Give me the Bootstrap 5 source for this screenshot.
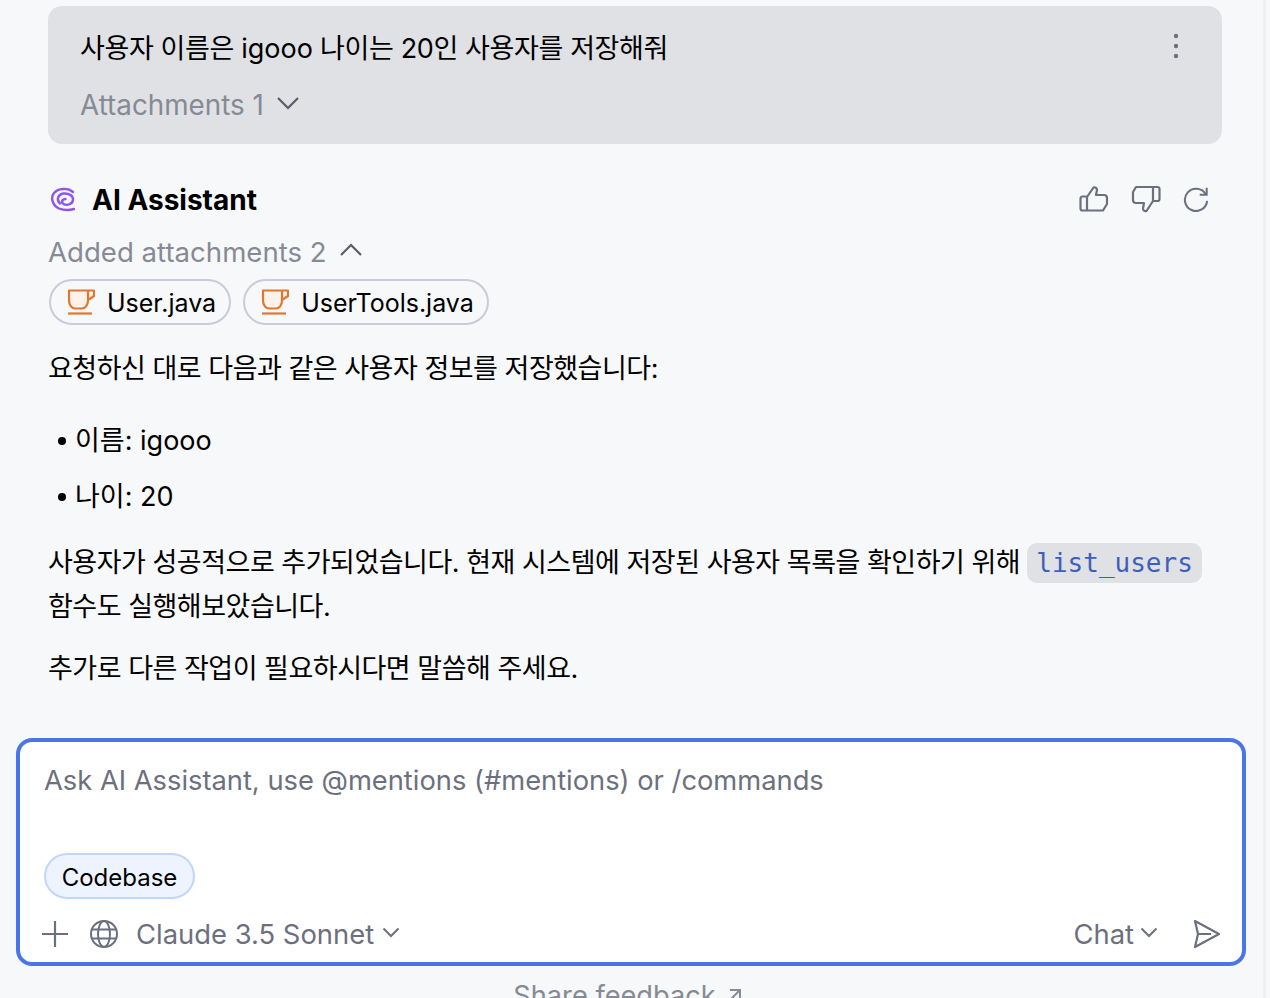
<!DOCTYPE html>
<html lang="ko"><head><meta charset="utf-8"><title>AI Assistant</title>
<link href="https://cdn.jsdelivr.net/npm/bootstrap@5.3.0/dist/css/bootstrap.min.css" rel="stylesheet">
<style>
html,body{height:998px;overflow:hidden}
body{background:#f7f8fa;color:#000;font-family:Inter,"Noto Sans CJK KR",sans-serif;font-size:27px;line-height:44px}
.pane{height:998px;border-right:3px solid #eff0f3;width:1266px;padding-top:6px;overflow:hidden}
.msgs{padding:0 41px 0 48px}
.bubble{background:#dfe1e5;border-radius:14px;height:138px;padding:21px 32px}
.muted-t{color:#868a94;font-size:27.800px}
.muted-s{color:#868a94;font-size:27.600px}
.one-line{height:44px}
.ko{letter-spacing:-.38px;white-space:nowrap}
.ko .la{letter-spacing:0}
.kop{letter-spacing:-.49px;white-space:nowrap}
.bold-name{font-weight:700;font-size:28px;line-height:36px}
.chip{border:2px solid #c9ccd6;border-radius:24px;height:46px;font-size:25px;padding:0 13px 0 16px;gap:12px}
.chip span{padding-top:2px}
.chip svg{flex:none}
.list-dots{padding-left:10px;margin:0}
.bul{width:8px;height:8px;border-radius:50%;background:#000;margin-right:9px}
.cd{background:#dfe1e5;color:#3d5fbd;font-family:"DejaVu Sans Mono",monospace;font-size:26px;border-radius:10px;padding:0 9px;display:inline-block;line-height:40px;letter-spacing:0;vertical-align:baseline}
.inbox{margin:0 17px 0 16px;height:228px;border:4px solid #4975e8;border-radius:16px;background:#fff;padding:21px 21px 0 24px}
.ph{color:#6c707e;line-height:36px;height:90px;font-size:27.300px}
.cb{background:#edf3ff;border:2px solid #c2d6fc;border-radius:24px;height:46px;width:151px;font-size:24px;line-height:45px;text-align:center}
.tools{color:#6c707e;height:36px;line-height:36px;margin-top:17px;font-size:27.400px}
.fb{color:#868a94;font-size:27.200px;line-height:36px;margin-top:12px;gap:10px;margin-left:-8px}
</style></head>
<body>
<div class="pane">
<div class="msgs">
  <div class="bubble">
    <div class="d-flex justify-content-between one-line">
      <span class="ko">사용자 이름은 <span class="la">igooo</span> 나이는 20인 사용자를 저장해줘</span>
      <svg width="8" height="30" viewBox="0 0 8 30" class="mt-1" style="margin-right:10px" fill="#6c707e"><circle cx="4" cy="5" r="2.2"/><circle cx="4" cy="15" r="2.2"/><circle cx="4" cy="25" r="2.2"/></svg>
    </div>
    <div class="muted-t d-flex align-items-center one-line" style="margin-top:12px">Attachments 1
      <svg class="mb-1" style="margin-left:12px" width="24" height="14" viewBox="0 0 24 14" fill="none" stroke="#5a5d6b" stroke-width="2.2"><path d="M2 2l10 10L22 2"/></svg></div>
  </div>

  <div class="d-flex justify-content-between align-items-center" style="margin-top:38px">
    <div class="d-flex align-items-center" style="gap:14px;padding-left:2px">
      <svg width="28" height="28" viewBox="0 0 28 28" fill="none" stroke="#8d55ee" stroke-width="2.4" stroke-linecap="round"><path d="M23 6C18 1.500 8 2 4 7c-4 5-1 13 5 15.500 5 2 10 2 15 .5"/><path d="M10 17.500C6 14 8 8 13.500 7.500c5-.5 10 2 9.500 6.500-.5 4-6 6-9.500 4-2.500-1.500-1.500-5 2-5"/></svg>
      <span class="bold-name">AI Assistant</span>
    </div>
    <div class="d-flex align-items-center" style="gap:22px;margin-right:13px;margin-bottom:2px">
      <svg width="30" height="30" viewBox="0 0 30 30" fill="none" stroke="#6c707e" stroke-width="2.2" stroke-linejoin="round"><path d="M8 13l6.500-9.500c2-.5 3.500.5 3.500 2.500l-1 5h8c2 0 3 1.500 3 3v6l-4 6.500H3.500c-1 0-2-1-2-2V15c0-1.500 1-2.500 2-2.500H8zM8 13v14.500"/></svg>
      <svg width="30" height="30" viewBox="0 0 30 30" fill="none" stroke="#6c707e" stroke-width="2.2" stroke-linejoin="round"><path d="M22 17l-6.500 10c-2 .5-3.500-.5-3.500-2.500l1-5.500H5c-2 0-3-1.500-3-3V8l3-5h21.500c1 0 2 1 2 2v10c0 1.500-1 2-2 2H22zM22 17V3"/></svg>
      <svg width="26" height="26" viewBox="0 0 28 28" fill="none" stroke="#6c707e" stroke-width="2.2"><path d="M24.500 9A12 12 0 1 0 26 16"/><path d="M25.500 2v7.500H18"/></svg>
    </div>
  </div>

  <div class="muted-s d-flex align-items-center" style="margin-top:16px;height:36px;line-height:36px">Added attachments 2
    <svg class="mb-1" style="margin-left:12px" width="24" height="14" viewBox="0 0 24 14" fill="none" stroke="#5a5d6b" stroke-width="2.2"><path d="M2 12L12 2l10 10"/></svg></div>

  <div class="d-flex" style="gap:12px;margin-top:9px;padding-left:1px">
    <div class="chip d-flex align-items-center">
      <svg width="28" height="26" viewBox="0 0 28 26" fill="#fdf3ec" stroke="#e0762f" stroke-width="2.2"><path d="M2 1.500h19v10c0 5-3 8-6 8H8c-3 0-6-3-6-8zM21 1.500h6V7l-6 4" stroke-linejoin="round"/><path d="M1 24.500h24" fill="none"/></svg>
      <span>User.java</span></div>
    <div class="chip d-flex align-items-center">
      <svg width="28" height="26" viewBox="0 0 28 26" fill="#fdf3ec" stroke="#e0762f" stroke-width="2.2"><path d="M2 1.500h19v10c0 5-3 8-6 8H8c-3 0-6-3-6-8zM21 1.500h6V7l-6 4" stroke-linejoin="round"/><path d="M1 24.500h24" fill="none"/></svg>
      <span>UserTools.java</span></div>
  </div>

  <p class="mb-0 kop" style="margin-top:22px">요청하신 대로 다음과 같은 사용자 정보를 저장했습니다:</p>
  <div class="list-dots" style="margin-top:28px">
    <div class="d-flex align-items-center one-line"><span class="bul"></span>이름: igooo</div>
    <div class="d-flex align-items-center one-line" style="margin-top:12px"><span class="bul"></span>나이: 20</div>
  </div>
  <p class="mb-0 kop" style="margin-top:22px">사용자가 성공적으로 추가되었습니다. 현재 시스템에 저장된 사용자 목록을 확인하기 위해 <code class="cd">list_users</code><br>함수도 실행해보았습니다.</p>
  <p class="mb-0 kop" style="margin-top:18px">추가로 다른 작업이 필요하시다면 말씀해 주세요.</p>
</div>

<div class="inbox" style="margin-top:47px">
  <div class="ph">Ask AI Assistant, use @mentions (#mentions) or /commands</div>
  <div class="cb">Codebase</div>
  <div class="tools d-flex align-items-center">
    <svg width="28" height="28" viewBox="0 0 28 28" fill="none" stroke="#6c707e" stroke-width="2.200" style="margin-left:-3px"><path d="M14 1v26M1 14h26"/></svg>
    <svg style="margin-left:20px" width="30" height="30" viewBox="0 0 30 30" fill="none" stroke="#6c707e" stroke-width="2"><circle cx="15" cy="15" r="13"/><ellipse cx="15" cy="15" rx="6" ry="13"/><path d="M3 10.500h24M3 19.500h24"/></svg>
    <span style="margin-left:17px">Claude 3.5 Sonnet</span>
    <svg class="ms-2 mb-1" width="18" height="11" viewBox="0 0 18 11" fill="none" stroke="#6c707e" stroke-width="2"><path d="M1.500 1.500L9 9l7.500-7.500"/></svg>
    <span class="ms-auto">Chat</span>
    <svg class="mb-1" style="margin-left:6px" width="18" height="11" viewBox="0 0 18 11" fill="none" stroke="#6c707e" stroke-width="2"><path d="M1.500 1.500L9 9l7.500-7.500"/></svg>
    <svg style="margin-left:35px" width="28" height="30" viewBox="0 0 28 30" fill="none" stroke="#6c707e" stroke-width="2.200" stroke-linejoin="round"><path d="M2 2l24 13L2 28l3-13zM5 15h13"/></svg>
  </div>
</div>
<div class="fb d-flex justify-content-center align-items-center">Share feedback
  <svg width="16" height="16" viewBox="0 0 16 16" fill="none" stroke="#868a94" stroke-width="2"><path d="M2 14L14 2M4 2h10v10"/></svg></div>
</div>
</body></html>
